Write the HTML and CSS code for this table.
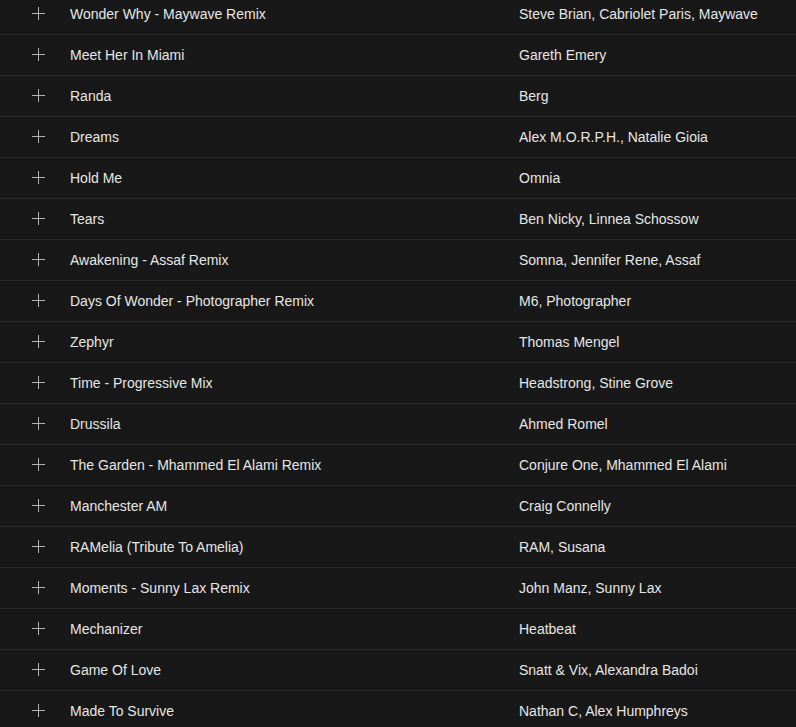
FILE: index.html
```html
<!DOCTYPE html>
<html>
<head>
<meta charset="utf-8">
<link rel="stylesheet" href="styles.css">
</head>
<body>
<div class="list">
  <div class="row"><span class="add"><svg viewBox="0 0 13 13" width="13" height="13"><path d="M6.5 0v13M0 6.5h13"/></svg></span><span class="title">Wonder Why - Maywave Remix</span><span class="artist">Steve Brian, Cabriolet Paris, Maywave</span></div>
  <div class="row"><span class="add"><svg viewBox="0 0 13 13" width="13" height="13"><path d="M6.5 0v13M0 6.5h13"/></svg></span><span class="title">Meet Her In Miami</span><span class="artist">Gareth Emery</span></div>
  <div class="row"><span class="add"><svg viewBox="0 0 13 13" width="13" height="13"><path d="M6.5 0v13M0 6.5h13"/></svg></span><span class="title">Randa</span><span class="artist">Berg</span></div>
  <div class="row"><span class="add"><svg viewBox="0 0 13 13" width="13" height="13"><path d="M6.5 0v13M0 6.5h13"/></svg></span><span class="title">Dreams</span><span class="artist">Alex M.O.R.P.H., Natalie Gioia</span></div>
  <div class="row"><span class="add"><svg viewBox="0 0 13 13" width="13" height="13"><path d="M6.5 0v13M0 6.5h13"/></svg></span><span class="title">Hold Me</span><span class="artist">Omnia</span></div>
  <div class="row"><span class="add"><svg viewBox="0 0 13 13" width="13" height="13"><path d="M6.5 0v13M0 6.5h13"/></svg></span><span class="title">Tears</span><span class="artist">Ben Nicky, Linnea Schossow</span></div>
  <div class="row"><span class="add"><svg viewBox="0 0 13 13" width="13" height="13"><path d="M6.5 0v13M0 6.5h13"/></svg></span><span class="title">Awakening - Assaf Remix</span><span class="artist">Somna, Jennifer Rene, Assaf</span></div>
  <div class="row"><span class="add"><svg viewBox="0 0 13 13" width="13" height="13"><path d="M6.5 0v13M0 6.5h13"/></svg></span><span class="title">Days Of Wonder - Photographer Remix</span><span class="artist">M6, Photographer</span></div>
  <div class="row"><span class="add"><svg viewBox="0 0 13 13" width="13" height="13"><path d="M6.5 0v13M0 6.5h13"/></svg></span><span class="title">Zephyr</span><span class="artist">Thomas Mengel</span></div>
  <div class="row"><span class="add"><svg viewBox="0 0 13 13" width="13" height="13"><path d="M6.5 0v13M0 6.5h13"/></svg></span><span class="title">Time - Progressive Mix</span><span class="artist">Headstrong, Stine Grove</span></div>
  <div class="row"><span class="add"><svg viewBox="0 0 13 13" width="13" height="13"><path d="M6.5 0v13M0 6.5h13"/></svg></span><span class="title">Drussila</span><span class="artist">Ahmed Romel</span></div>
  <div class="row"><span class="add"><svg viewBox="0 0 13 13" width="13" height="13"><path d="M6.5 0v13M0 6.5h13"/></svg></span><span class="title">The Garden - Mhammed El Alami Remix</span><span class="artist">Conjure One, Mhammed El Alami</span></div>
  <div class="row"><span class="add"><svg viewBox="0 0 13 13" width="13" height="13"><path d="M6.5 0v13M0 6.5h13"/></svg></span><span class="title">Manchester AM</span><span class="artist">Craig Connelly</span></div>
  <div class="row"><span class="add"><svg viewBox="0 0 13 13" width="13" height="13"><path d="M6.5 0v13M0 6.5h13"/></svg></span><span class="title">RAMelia (Tribute To Amelia)</span><span class="artist">RAM, Susana</span></div>
  <div class="row"><span class="add"><svg viewBox="0 0 13 13" width="13" height="13"><path d="M6.5 0v13M0 6.5h13"/></svg></span><span class="title">Moments - Sunny Lax Remix</span><span class="artist">John Manz, Sunny Lax</span></div>
  <div class="row"><span class="add"><svg viewBox="0 0 13 13" width="13" height="13"><path d="M6.5 0v13M0 6.5h13"/></svg></span><span class="title">Mechanizer</span><span class="artist">Heatbeat</span></div>
  <div class="row"><span class="add"><svg viewBox="0 0 13 13" width="13" height="13"><path d="M6.5 0v13M0 6.5h13"/></svg></span><span class="title">Game Of Love</span><span class="artist">Snatt &amp; Vix, Alexandra Badoi</span></div>
  <div class="row"><span class="add"><svg viewBox="0 0 13 13" width="13" height="13"><path d="M6.5 0v13M0 6.5h13"/></svg></span><span class="title">Made To Survive</span><span class="artist">Nathan C, Alex Humphreys</span></div>
</div>
</body>
</html>
```
FILE: styles.css
```css
html, body {
  margin: 0;
  padding: 0;
  background: #181818;
  overflow: hidden;
}
body {
  font-family: "Liberation Sans", Arial, sans-serif;
  font-size: 14px;
  color: #e6e6e6;
}
.list {
  margin-top: -6px;
}
.row {
  display: grid;
  grid-template-columns: 70px 449px 1fr;
  align-items: center;
  height: 40px;
  border-bottom: 1px solid #2a2a2a;
}
.add {
  display: flex;
  padding-left: 32px;
  margin-top: -2px;
}
.add svg {
  stroke: #b3b3b3;
  stroke-width: 1;
  fill: none;
  display: block;
}
.title, .artist {
  white-space: nowrap;
  overflow: hidden;
}
```
